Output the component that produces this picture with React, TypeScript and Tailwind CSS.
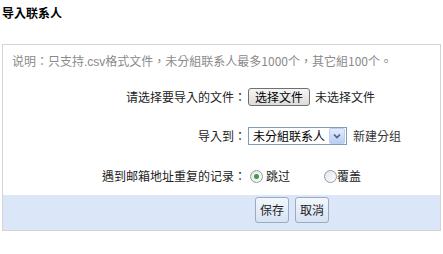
export default function App() {
  const font = { fontFamily: '"Noto Sans CJK TC", "Liberation Sans", sans-serif' };
  return (
    <div className="w-[443px] h-[254px] bg-white text-[12px] leading-[16px] text-[#222]" style={font}>
      <div className="h-[44px] pl-[2px] pt-[5px] font-bold text-[12px] text-black">导入联系人</div>

      <div className="ml-[2px] mr-[2px] border border-[#d4d4d4]">
        <div className="h-[34px] pl-[9px] pt-[8px] text-[#8a8a8a]">
          说明：只支持<span style={{ fontFamily: '"Liberation Sans", sans-serif' }}>.csv</span>格式文件，未分組联系人最多1000个，其它組100个。
        </div>

        <div className="grid grid-cols-[245px_1fr] h-[36px] items-center">
          <div className="text-right pr-[2px]">请选择要导入的文件：</div>
          <div className="flex items-center gap-[5px]">
            <button className="h-[18px] px-[6px] border border-[#707070] rounded-[3px] bg-gradient-to-b from-[#f6f6f6] to-[#dcdcdc] text-[12px] leading-[14px] text-black">选择文件</button>
            <span>未选择文件</span>
          </div>
        </div>

        <div className="grid grid-cols-[245px_1fr] h-[42px] items-center">
          <div className="text-right pr-[2px]">导入到：</div>
          <div className="flex items-center gap-[6px]">
            <div className="flex items-center h-[18px] w-[99px] border border-[#7f9db9] bg-white">
              <span className="flex-1 pl-[4px] text-black">未分組联系人</span>
              <span className="w-[16px] h-[16px] mr-[1px] rounded-[2px] bg-gradient-to-b from-[#e3ecfc] to-[#b9cdf4] border border-[#bccdf0] flex items-center justify-center">
                <svg width="8" height="6" viewBox="0 0 8 6">
                  <path d="M1 1.5 L4 4.5 L7 1.5" fill="none" stroke="#4d6185" strokeWidth="1.6" />
                </svg>
              </span>
            </div>
            <span className="text-[#333]">新建分组</span>
          </div>
        </div>

        <div className="grid grid-cols-[245px_1fr] h-[38px] items-center">
          <div className="text-right pr-[2px]">遇到邮箱地址重复的记录：</div>
          <div className="flex items-center">
            <span className="ml-[2px] w-[13px] h-[13px] rounded-full border border-[#8a9bb0] bg-gradient-to-br from-[#e4e4e4] to-white flex items-center justify-center">
              <span className="w-[5px] h-[5px] rounded-full bg-[#3f9d3f]" />
            </span>
            <span className="ml-[3px]">跳过</span>
            <span className="ml-[34px] w-[13px] h-[13px] rounded-full border border-[#8a9bb0] bg-gradient-to-br from-[#e4e4e4] to-white" />
            <span>覆盖</span>
          </div>
        </div>

        <div className="h-[35px] bg-[#dbe7f9] flex items-start pt-[2px] pl-[252px] gap-[6px]">
          <button className="h-[26px] w-[34px] border border-[#9aabc2] rounded-[3px] bg-gradient-to-b from-[#f3f7fd] to-[#d6e2f3] text-[12px] text-[#222]">保存</button>
          <button className="h-[26px] w-[34px] border border-[#9aabc2] rounded-[3px] bg-gradient-to-b from-[#f3f7fd] to-[#d6e2f3] text-[12px] text-[#222]">取消</button>
        </div>
      </div>
    </div>
  );
}
